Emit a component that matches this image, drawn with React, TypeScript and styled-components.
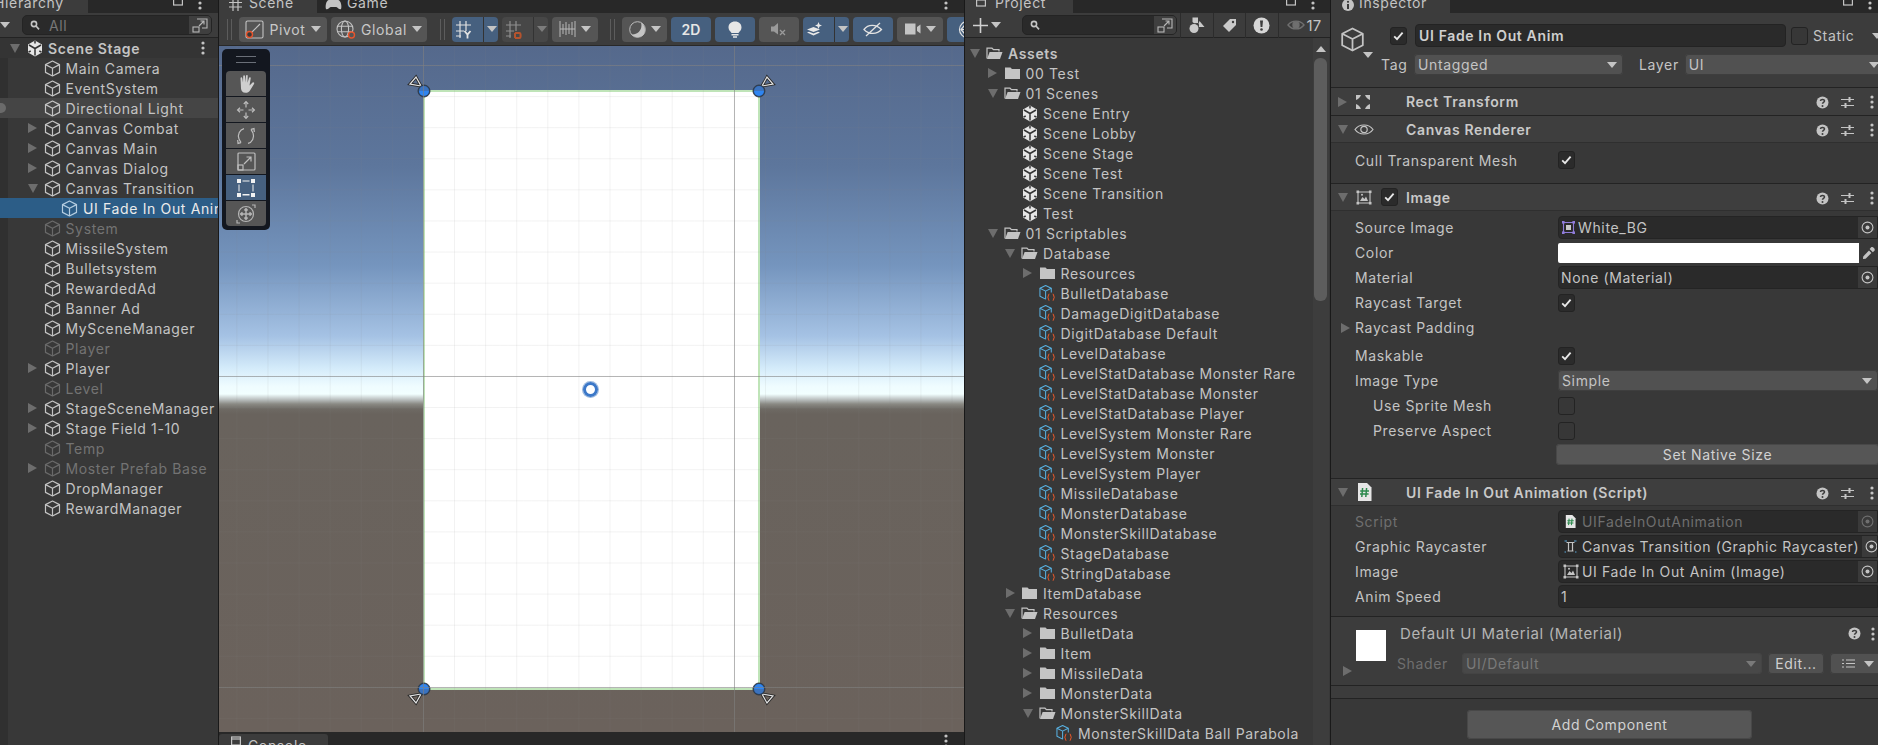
import React from 'react';
import styled, { createGlobalStyle } from 'styled-components';

const GlobalStyle = createGlobalStyle`
  html, body {
    margin: 0;
    padding: 0;
    width: 1878px;
    height: 745px;
    overflow: hidden;
    background: #191919;
  }
  * { box-sizing: border-box; }
`;

const TEXT = '#c4c4c4';

/* ---------- icons ---------- */

const Cube: React.FC<{ color?: string; size?: number }> = ({ color = '#c4c4c4', size = 17 }) => (
  <svg width={size} height={size} viewBox="0 0 17 17" fill="none" stroke={color} strokeWidth="1.2" strokeLinejoin="round">
    <path d="M8.5 1 15.5 4.6V12.4L8.5 16 1.5 12.4V4.6Z" />
    <path d="M1.5 4.6 8.5 8.2 15.5 4.6M8.5 8.2V16" />
  </svg>
);

const UnityLogo: React.FC = () => (
  <svg width="16" height="17" viewBox="0 0 16 17">
    <path fill="#e6e6e6" d="M8 0.5 15 4.5V12.5L8 16.5 1 12.5V4.5Z" />
    <path fill="none" stroke="#333" strokeWidth="1.5" d="M8 8.5V15.5M8 8.5 2 5M8 8.5 14 5M8 1V3.5M1.5 12.2 3.7 11M14.5 12.2 12.3 11" />
  </svg>
);

const Folder: React.FC<{ open?: boolean }> = ({ open }) => (
  <svg width="17" height="14" viewBox="0 0 17 14">
    {open ? (
      <>
        <path fill="none" stroke="#c4c4c4" strokeWidth="1.2" d="M1 12.5V2.2H6L7.5 3.6H13V5.5" />
        <path fill="#c4c4c4" d="M3.6 6H16.5L14 13H1Z" />
      </>
    ) : (
      <path fill="#c4c4c4" d="M1 1.5H6.5L8 3H16V13H1Z" />
    )}
  </svg>
);

const ScriptableIcon: React.FC = () => (
  <svg width="18" height="18" viewBox="0 0 18 18" fill="none">
    <g stroke="#58b0e0" strokeWidth="1.1" strokeLinejoin="round">
      <path d="M7 1 13 4V8.5M7 15.5 1 12.5V4L7 1" />
      <path d="M1 4 7 7 13 4M7 7V15.5" />
    </g>
    <g stroke="#e0562a" strokeWidth="1.2">
      <path d="M11 10C9.6 10 10.4 13.2 9 13.5 10.4 13.8 9.6 17 11 17" />
      <path d="M14.5 10C15.9 10 15.1 13.2 16.5 13.5 15.1 13.8 15.9 17 14.5 17" />
    </g>
  </svg>
);

const Arrow = styled.i<{ $open?: boolean; $tone?: string }>`
  display: block;
  width: 0;
  height: 0;
  ${(p) =>
    p.$open
      ? `border-left: 5px solid transparent; border-right: 5px solid transparent; border-top: 9px solid ${p.$tone || '#6d6d6d'};`
      : `border-top: 5px solid transparent; border-bottom: 5px solid transparent; border-left: 9px solid ${p.$tone || '#6d6d6d'};`}
`;

const Caret = styled.i<{ $tone?: string }>`
  display: block;
  flex: none;
  width: 0;
  height: 0;
  border-left: 5px solid transparent;
  border-right: 5px solid transparent;
  border-top: 6px solid ${(p) => p.$tone || '#c4c4c4'};
`;

const Dots: React.FC<{ color?: string }> = ({ color = '#c4c4c4' }) => (
  <svg width="4" height="14" viewBox="0 0 4 14" fill={color}>
    <circle cx="2" cy="2" r="1.6" />
    <circle cx="2" cy="7" r="1.6" />
    <circle cx="2" cy="12" r="1.6" />
  </svg>
);

const Maximize: React.FC = () => (
  <svg width="10" height="14" viewBox="0 0 10 14" fill="none" stroke="#c4c4c4" strokeWidth="1.2">
    <rect x="0.6" y="1" width="8.8" height="8" />
    <path d="M0.6 3H9.4" />
  </svg>
);

const Help: React.FC = () => (
  <svg width="13" height="13" viewBox="0 0 13 13">
    <circle cx="6.5" cy="6.5" r="6" fill="#c4c4c4" />
    <path d="M4.4 5C4.6 2.9 8.6 3 8.5 5 8.4 6.3 6.5 6.3 6.5 7.8" fill="none" stroke="#3c3c3c" strokeWidth="1.5" />
    <circle cx="6.5" cy="10" r="1" fill="#3c3c3c" />
  </svg>
);

const Presets: React.FC = () => (
  <svg width="13" height="13" viewBox="0 0 13 13" stroke="#c4c4c4" strokeWidth="1.2" fill="none">
    <path d="M0 3.5H13M0 9.5H13" />
    <path d="M8.5 1V6M4.5 7V12" strokeWidth="2" />
  </svg>
);

const SearchGlyph: React.FC = () => (
  <svg width="13" height="11" viewBox="0 0 13 11" fill="none" stroke="#c4c4c4" strokeWidth="1.6">
    <circle cx="4" cy="4" r="2.6" />
    <path d="M6 6 9 9.4" />
  </svg>
);

const ExpandGlyph: React.FC = () => (
  <svg width="16" height="15" viewBox="0 0 16 15" fill="none" stroke="#b8b8b8" strokeWidth="1.1">
    <path d="M5 1H15V10H10" />
    <rect x="1" y="9" width="6" height="5" />
    <path d="M7 8 12 3M8.5 3H12V6.5" />
  </svg>
);

const CircleDot: React.FC<{ color?: string }> = ({ color = '#c4c4c4' }) => (
  <svg width="13" height="13" viewBox="0 0 13 13" fill="none">
    <circle cx="6.5" cy="6.5" r="5.4" stroke={color} strokeWidth="1.1" />
    <circle cx="6.5" cy="6.5" r="2" fill={color} />
  </svg>
);

const Tick: React.FC = () => (
  <svg width="11" height="10" viewBox="0 0 11 10" fill="none" stroke="#e8e8e8" strokeWidth="1.8">
    <path d="M1.2 5.4 4 8.2 9.6 1.6" />
  </svg>
);

const ImageGlyph: React.FC<{ color?: string }> = ({ color = '#c4c4c4' }) => (
  <svg width="16" height="15" viewBox="0 0 16 15" fill="none" stroke={color} strokeWidth="1.1">
    <path d="M2 2H14V13H2Z" />
    <rect x="0.5" y="0.5" width="2.6" height="2.6" fill={color} stroke="none" />
    <rect x="12.9" y="0.5" width="2.6" height="2.6" fill={color} stroke="none" />
    <rect x="0.5" y="11.9" width="2.6" height="2.6" fill={color} stroke="none" />
    <rect x="12.9" y="11.9" width="2.6" height="2.6" fill={color} stroke="none" />
    <path d="M4 11 6.5 7 8.5 9 10 6.5 12 11Z" fill={color} stroke="none" />
    <circle cx="6" cy="4.8" r="1" fill={color} stroke="none" />
  </svg>
);

const SpriteGlyph: React.FC = () => (
  <svg width="13" height="13" viewBox="0 0 13 13" fill="none" stroke="#8f7bd8" strokeWidth="1.1">
    <path d="M1.5 1.5H11.5V11.5H1.5Z" />
    <rect x="0" y="0" width="2.6" height="2.6" fill="#8f7bd8" stroke="none" />
    <rect x="10.4" y="0" width="2.6" height="2.6" fill="#8f7bd8" stroke="none" />
    <rect x="0" y="10.4" width="2.6" height="2.6" fill="#8f7bd8" stroke="none" />
    <rect x="10.4" y="10.4" width="2.6" height="2.6" fill="#8f7bd8" stroke="none" />
    <rect x="4" y="4" width="5" height="5" fill="#c9c9c9" stroke="none" />
  </svg>
);

const RectGlyph: React.FC = () => (
  <svg width="16" height="16" viewBox="0 0 16 16" fill="#c4c4c4">
    <path d="M1 1H6L5 3 3 5 1 6ZM15 1H10L11 3 13 5 15 6ZM1 15H6L5 13 3 11 1 10ZM15 15H10L11 13 13 11 15 10Z" />
  </svg>
);

const EyeGlyph: React.FC = () => (
  <svg width="20" height="15" viewBox="0 0 20 15" fill="none" stroke="#c4c4c4" strokeWidth="1.2">
    <path d="M1 7.5C5 1.5 15 1.5 19 7.5 15 13.5 5 13.5 1 7.5Z" />
    <circle cx="10" cy="7.5" r="3.2" />
  </svg>
);

const ScriptGlyph: React.FC<{ small?: boolean }> = ({ small }) => (
  <svg width={small ? 11 : 15} height={small ? 13 : 18} viewBox="0 0 15 18">
    <path fill="#e6e6e6" d="M1 0H10L14.5 4.5V18H1Z" />
    <path stroke="#2d8a4e" strokeWidth="1.5" fill="none" d="M5.6 5 4.8 14M9.6 5 8.8 14M3.2 8H12M3 11H11.6" />
  </svg>
);

const Eyedropper: React.FC = () => (
  <svg width="14" height="14" viewBox="0 0 14 14" fill="#c4c4c4">
    <path d="M9 1.5C10.5 0 13.8 3.2 12.4 4.8L10.8 6.2 7.6 3Z" />
    <path d="M7 4.5 9.4 7 3.6 12.8 1 13 1.2 10.4Z" />
  </svg>
);

/* ---------- layout ---------- */

const Root = styled.div`
  display: flex;
  width: 1878px;
  height: 745px;
  overflow: hidden;
  background: #191919;
  font-family: Inter, 'Liberation Sans', sans-serif;
  font-size: 14px;
  letter-spacing: 0.64px;
  color: ${TEXT};
`;

const Panel = styled.section<{ $width: number; $gap?: number }>`
  flex: none;
  display: flex;
  flex-direction: column;
  width: ${(p) => p.$width}px;
  margin-right: ${(p) => p.$gap ?? 0}px;
  height: 745px;
  overflow: hidden;
  background: #383838;
`;

const TabBar = styled.div`
  flex: none;
  height: 13px;
  display: flex;
  align-items: flex-end;
  background: #282828;
  overflow: hidden;
`;

const Tab = styled.div<{ $width: number; $active?: boolean; $pad?: number; $gap?: number }>`
  flex: none;
  width: ${(p) => p.$width}px;
  height: 13px;
  display: flex;
  align-items: flex-end;
  gap: ${(p) => p.$gap ?? 7}px;
  padding-left: ${(p) => p.$pad ?? 8}px;
  background: ${(p) => (p.$active ? '#3c3c3c' : 'transparent')};
  overflow: hidden;
  > span {
    line-height: 20px;
    white-space: nowrap;
  }
  > svg { flex: none; margin-bottom: 2px; }
`;

const ClippedLabel = styled.span`
  margin-left: -6px;
`;

const TabActions = styled.div<{ $gap?: number; $pad?: number; $top?: boolean }>`
  margin-left: auto;
  height: 13px;
  display: flex;
  align-items: ${(p) => (p.$top ? 'flex-start' : 'flex-end')};
  gap: ${(p) => p.$gap ?? 15}px;
  padding-right: ${(p) => p.$pad ?? 16}px;
  > svg { flex: none; margin-bottom: 3px; }
`;

const SearchToolbar = styled.div`
  flex: none;
  height: 25px;
  display: flex;
  align-items: center;
  border-bottom: 1px solid #232323;
  background: #3c3c3c;
`;

const SearchField = styled.div<{ $width: number; $left: number }>`
  flex: none;
  width: ${(p) => p.$width}px;
  height: 20px;
  margin-left: ${(p) => p.$left}px;
  display: flex;
  align-items: center;
  padding-left: 7px;
  gap: 6px;
  border-radius: 5px;
  background: #2a2a2a;
  border: 1px solid #242424;
  color: #777;
  > button {
    all: unset;
    margin-left: auto;
    width: 22px;
    height: 18px;
    display: flex;
    align-items: center;
    justify-content: center;
    background: #3f3f3f;
    border-radius: 0 4px 4px 0;
  }
`;

const Tree = styled.div<{ $gutter?: boolean; $top: number }>`
  flex: 1;
  min-width: 0;
  min-height: 0;
  padding-top: ${(p) => p.$top}px;
  overflow: hidden;
  background: ${(p) => (p.$gutter ? 'linear-gradient(90deg, #303030 8px, #383838 8px)' : '#383838')};
`;

const Row = styled.div<{ $depth: number; $base: number; $state?: string; $strong?: boolean }>`
  position: relative;
  height: 20px;
  display: flex;
  align-items: center;
  padding-left: ${(p) => p.$base + p.$depth * 17.5}px;
  white-space: nowrap;
  overflow: hidden;
  font-weight: ${(p) => (p.$strong ? 600 : 400)};
  color: ${(p) => (p.$state === 'off' ? '#737373' : p.$state === 'sel' ? '#ebebeb' : TEXT)};
  background: ${(p) => (p.$state === 'sel' ? '#2c5d87' : p.$state === 'hover' ? '#454545' : p.$state === 'root' ? '#343434' : 'transparent')};
`;

const RowArrow = styled.span`
  flex: none;
  width: 12px;
  display: flex;
  justify-content: center;
`;

const RowIcon = styled.span`
  flex: none;
  width: 17px;
  margin: 0 5px 0 5px;
  display: flex;
  justify-content: center;
  align-items: center;
`;

const RowDot = styled.i`
  position: absolute;
  left: -4px;
  top: 5px;
  width: 10px;
  height: 10px;
  border-radius: 50%;
  background: #6a6a6a;
`;

const RowEnd = styled.span`
  position: absolute;
  right: 13px;
  top: 3px;
  display: flex;
`;

/* ---------- scene ---------- */

const SceneToolbar = styled.div`
  flex: none;
  height: 33px;
  display: flex;
  align-items: center;
  padding-left: 8px;
  background: #3c3c3c;
  border-bottom: 1px solid #282828;
  overflow: hidden;
`;

const Grip = styled.i<{ $left: number; $right: number }>`
  flex: none;
  width: 5px;
  height: 21px;
  margin: 0 ${(p) => p.$right}px 0 ${(p) => p.$left}px;
  border-left: 1px solid #5c5c5c;
  border-right: 1px solid #5c5c5c;
`;

const ToolButton = styled.div<{ $width: number; $tone?: string; $gap?: number }>`
  flex: none;
  width: ${(p) => p.$width}px;
  height: 25px;
  margin-right: ${(p) => p.$gap ?? 4}px;
  display: flex;
  align-items: center;
  justify-content: center;
  gap: 5px;
  border-radius: 4px;
  font-size: 14px;
  color: #c8c8c8;
  background: ${(p) => (p.$tone === 'blue' ? '#46607f' : p.$tone === 'dim' ? '#474747' : '#555555')};
`;

const SplitPart = styled.span<{ $width: number }>`
  flex: none;
  width: ${(p) => p.$width}px;
  height: 100%;
  display: flex;
  align-items: center;
  justify-content: center;
  & + & { border-left: 1px solid #333; }
`;

const Badge2D = styled.span`
  font-weight: 600;
  color: #e6e6e6;
  letter-spacing: 0;
`;

const Viewport = styled.div`
  position: relative;
  flex: none;
  height: 686px;
  overflow: hidden;
  background: linear-gradient(
    180deg,
    #55698c 0px,
    #5d769c 120px,
    #7595be 220px,
    #a5c2e4 290px,
    #d4ebfa 322px,
    #effcff 340px,
    #f2ffff 348px,
    #c0c6c6 353px,
    #8a8a84 358px,
    #6e6a64 363px,
    #69635d 368px,
    #6b625c 686px
  );
`;

const SceneRect = styled.div`
  position: absolute;
  left: 204px;
  top: 44px;
  width: 337px;
  height: 600px;
  background: #fff;
  border: 2px solid #bfe4b8;
`;

const GridLayer = styled.div`
  position: absolute;
  inset: 0;
  pointer-events: none;
  background-image:
    linear-gradient(90deg, rgba(128, 128, 128, 0.55) 1px, transparent 1px),
    linear-gradient(180deg, rgba(128, 128, 128, 0.55) 1px, transparent 1px),
    linear-gradient(90deg, rgba(128, 128, 128, 0.1) 1px, transparent 1px),
    linear-gradient(180deg, rgba(128, 128, 128, 0.1) 1px, transparent 1px);
  background-size: 311px 311px, 311px 311px, 31.1px 31.1px, 31.1px 31.1px;
  background-position: 204px 19px, 204px 19px, 17.4px 19px, 17.4px 19px;
`;

const Gizmo = styled.svg<{ $h: string; $v: string; $flipX?: boolean; $flipY?: boolean }>`
  position: absolute;
  width: 30px;
  height: 30px;
  ${(p) => p.$h}: -16px;
  ${(p) => p.$v}: -16px;
  transform: scale(${(p) => (p.$flipX ? -1 : 1)}, ${(p) => (p.$flipY ? -1 : 1)});
  overflow: visible;
`;

const Pivot = styled.i`
  position: absolute;
  left: 364px;
  top: 336px;
  width: 15px;
  height: 15px;
  border-radius: 50%;
  border: 3.5px solid #3c78c8;
  box-shadow: 0 0 0 1px #9db9dd;
`;

const ToolDock = styled.div`
  position: absolute;
  left: 3px;
  top: 3px;
  width: 48px;
  height: 181px;
  padding: 22px 4px 0;
  display: flex;
  flex-direction: column;
  gap: 1px;
  background: #13171f;
  border-radius: 5px;
  &::before {
    content: '';
    position: absolute;
    left: 14px;
    top: 7px;
    width: 20px;
    height: 5px;
    border-top: 1px solid #6a6f78;
    border-bottom: 1px solid #6a6f78;
  }
`;

const DockButton = styled.div<{ $active?: boolean }>`
  height: 25px;
  display: flex;
  align-items: center;
  justify-content: center;
  background: ${(p) => (p.$active ? '#46607f' : '#565656')};
  &:first-of-type { border-radius: 4px 4px 0 0; }
  &:last-of-type { border-radius: 0 0 4px 4px; }
`;

const ConsoleBar = styled.div`
  flex: none;
  height: 13px;
  padding-top: 2px;
  background: #282828;
  display: flex;
  overflow: hidden;
`;

const ConsoleTab = styled.div`
  flex: none;
  width: 109px;
  height: 14px;
  padding-left: 12px;
  display: flex;
  gap: 7px;
  background: #3c3c3c;
  border-radius: 3px 3px 0 0;
  > span { line-height: 20px; margin-top: 2px; }
  > svg { margin-top: 2px; flex: none; }
`;

/* ---------- project ---------- */

const FilterGap = styled.span`
  flex: none;
  width: 3px;
`;

const FilterCell = styled.div`
  flex: none;
  width: 32.5px;
  height: 25px;
  display: flex;
  align-items: center;
  justify-content: center;
  border-left: 1px solid #2c2c2c;
`;

const AddButton = styled.div`
  flex: none;
  display: flex;
  align-items: center;
  gap: 3px;
  width: 57px;
  padding-left: 8px;
`;

const CountCell = styled.div`
  flex: none;
  display: flex;
  align-items: center;
  gap: 2px;
  padding-left: 8px;
  height: 25px;
  border-left: 1px solid #2c2c2c;
  font-size: 15px;
  letter-spacing: 0.2px;
`;

const TreeWrap = styled.div`
  position: relative;
  flex: 1;
  min-height: 0;
  display: flex;
`;

const ScrollTrack = styled.div`
  position: relative;
  flex: none;
  width: 16px;
  margin-right: 1px;
  background: #3d3d3d;
  &::before {
    content: '';
    position: absolute;
    left: 3px;
    top: 8px;
    border-left: 5px solid transparent;
    border-right: 5px solid transparent;
    border-bottom: 6px solid #c4c4c4;
  }
  &::after {
    content: '';
    position: absolute;
    left: 1px;
    top: 20px;
    width: 13px;
    height: 243px;
    border-radius: 6px;
    background: #5d5d5d;
  }
`;

/* ---------- inspector ---------- */

const InspectorHead = styled.div`
  flex: none;
  height: 75px;
  background: #3c3c3c;
  border-bottom: 1px solid #232323;
  display: grid;
  grid-template-columns: 24px 1fr;
  padding: 11px 0 0 9px;
`;

const HeadIcon = styled.div`
  position: relative;
  width: 24px;
  height: 26px;
  margin-top: 3px;
  > i { position: absolute; right: -9px; bottom: -5px; }
`;

const HeadLines = styled.div`
  display: flex;
  flex-direction: column;
`;

const HeadLine = styled.div<{ $second?: boolean }>`
  display: flex;
  align-items: center;
  height: ${(p) => (p.$second ? 21 : 23)}px;
  margin-top: ${(p) => (p.$second ? 7 : 0)}px;
  white-space: nowrap;
`;

const HeadIndent = styled.span`
  flex: none;
  width: 26px;
`;

const TagLabel = styled.span`
  flex: none;
  width: 50px;
  padding-left: 17px;
`;

const LayerLabel = styled.span`
  margin: 0 6px 0 16px;
`;

const StaticLabel = styled.span`
  margin-left: 5px;
  margin-right: 18px;
`;

const Check = styled.div<{ $on?: boolean }>`
  flex: none;
  width: 17px;
  height: 18px;
  display: flex;
  align-items: center;
  justify-content: center;
  border-radius: 3px;
  background: ${(p) => (p.$on ? '#2b2b2b' : '#373737')};
  border: 1px solid #232323;
`;

const NameField = styled.div`
  flex: none;
  width: 371px;
  height: 23px;
  margin: 0 5px 0 8px;
  padding-left: 3px;
  display: flex;
  align-items: center;
  font-weight: 600;
  color: #cfcfcf;
  background: #2a2a2a;
  border: 1px solid #232323;
  border-radius: 4px;
`;

const Dropdown = styled.div<{ $width?: number; $dim?: boolean }>`
  flex: ${(p) => (p.$width ? 'none' : 1)};
  width: ${(p) => (p.$width ? `${p.$width}px` : 'auto')};
  min-width: 0;
  height: 21px;
  padding: 0 6px 0 4px;
  display: flex;
  align-items: center;
  justify-content: space-between;
  border-radius: 4px;
  white-space: nowrap;
  color: ${(p) => (p.$dim ? '#7a7a7a' : TEXT)};
  background: ${(p) => (p.$dim ? '#484848' : '#515151')};
  box-shadow: inset 0 0 0 1px ${(p) => (p.$dim ? '#444' : '#3e3e3e')};
`;

const Section = styled.div<{ $first?: boolean }>`
  position: relative;
  flex: none;
  height: ${(p) => (p.$first ? 28 : 27)}px;
  display: flex;
  align-items: center;
  padding-left: 7px;
  background: #3e3e3e;
  border-bottom: 1px solid ${(p) => (p.$first ? '#232323' : '#2f2f2f')};
  font-weight: 600;
  color: #c9c9c9;
  white-space: nowrap;
`;

const SectionIcon = styled.span`
  flex: none;
  width: 20px;
  margin-left: 6px;
  display: flex;
  justify-content: center;
`;

const SectionTitle = styled.span`
  position: absolute;
  left: 75px;
`;

const SectionCheck = styled(Check)`
  position: absolute;
  left: 50px;
`;

const SectionTools = styled.div`
  position: absolute;
  right: 4px;
  top: 7px;
  display: grid;
  grid-template-columns: 13px 13px 8px;
  column-gap: 12px;
  align-items: center;
  justify-items: end;
`;

const Body = styled.div<{ $bottom: number; $top: number }>`
  flex: none;
  padding: ${(p) => p.$top}px 0 ${(p) => p.$bottom}px;
  border-bottom: 1px solid #232323;
`;

const Field = styled.div<{ $h?: number; $indent?: boolean; $dim?: boolean; $after?: boolean }>`
  position: relative;
  height: ${(p) => p.$h ?? 25}px;
  margin-top: ${(p) => (p.$after ? 3 : 0)}px;
  display: grid;
  align-items: center;
  padding-left: ${(p) => (p.$indent ? 42 : 24)}px;
  grid-template-columns: ${(p) => (p.$indent ? '185px 1fr' : '203px 1fr')};
  white-space: nowrap;
  color: ${(p) => (p.$dim ? '#6f6f6f' : TEXT)};
  > i { position: absolute; left: 10px; top: 8px; }
`;

const ObjectField = styled.div<{ $muted?: boolean; $plain?: boolean }>`
  height: 23px;
  display: flex;
  align-items: center;
  gap: 3px;
  padding-left: ${(p) => (p.$plain ? 2 : 3)}px;
  background: #2a2a2a;
  border: 1px solid #242424;
  border-radius: 4px 0 0 4px;
  color: ${(p) => (p.$muted ? '#6f6f6f' : TEXT)};
  overflow: hidden;
`;

const FieldGlyph = styled.span`
  flex: none;
  width: 17px;
  display: flex;
  justify-content: center;
`;

const Picker = styled.span`
  margin-left: auto;
  flex: none;
  width: 19px;
  height: 21px;
  display: flex;
  align-items: center;
  justify-content: center;
  background: #3a3a3a;
`;

const ColorWell = styled.div`
  height: 21px;
  display: flex;
  align-items: center;
  > b { display: block; width: 301px; height: 20px; background: #fff; border-radius: 2px 0 0 2px; }
  > svg { margin-left: 3px; flex: none; }
`;

const WideButton = styled.div<{ $width: number; $left: number; $height: number; $top?: number }>`
  width: ${(p) => p.$width}px;
  height: ${(p) => p.$height}px;
  margin-left: ${(p) => p.$left}px;
  margin-top: ${(p) => p.$top ?? 0}px;
  display: flex;
  align-items: center;
  justify-content: center;
  background: #565656;
  color: #d2d2d2;
  border-radius: 4px;
  box-shadow: inset 0 0 0 1px #484848;
`;

const MaterialPanel = styled.div`
  position: relative;
  flex: none;
  height: 69px;
  background: #3c3c3c;
  border-bottom: 1px solid #232323;
`;

const Swatch = styled.div`
  position: absolute;
  left: 25px;
  top: 13px;
  width: 30px;
  height: 31px;
  background: #fff;
`;

const MaterialArrow = styled.span`
  position: absolute;
  left: 12px;
  top: 49px;
`;

const MaterialTitle = styled.div`
  position: absolute;
  left: 69px;
  top: 7px;
  color: #b4b4b4;
  font-size: 15px;
  white-space: nowrap;
`;

const MaterialRow = styled.div`
  position: absolute;
  left: 66px;
  right: -6px;
  top: 36px;
  height: 21px;
  display: flex;
  align-items: center;
  color: #6f6f6f;
  > label { width: 65px; flex: none; }
`;

const SmallButton = styled.div<{ $width: number }>`
  flex: none;
  width: ${(p) => p.$width}px;
  height: 21px;
  margin-left: 6px;
  display: flex;
  align-items: center;
  justify-content: center;
  gap: 9px;
  background: #515151;
  border-radius: 4px;
  color: #d0d0d0;
  box-shadow: inset 0 0 0 1px #3e3e3e;
`;

const MaterialHelp = styled.div`
  position: absolute;
  right: 3px;
  top: 10px;
  display: flex;
  gap: 10px;
`;

const Spacer = styled.div<{ $h: number }>`
  flex: none;
  height: ${(p) => p.$h}px;
  border-bottom: 1px solid #232323;
  background: #3c3c3c;
`;

const AddRow = styled.div`
  flex: none;
  padding-top: 11px;
`;

/* ---------- data ---------- */

type Item = { name: string; depth: number; arrow?: 'open' | 'closed'; icon: 'cube' | 'logo' | 'folder' | 'open' | 'data'; state?: string; strong?: boolean; dot?: boolean };

const hierarchy: Item[] = [
  { name: 'Scene Stage', depth: 0, arrow: 'open', icon: 'logo', strong: true, state: 'root' },
  { name: 'Main Camera', depth: 1, icon: 'cube' },
  { name: 'EventSystem', depth: 1, icon: 'cube' },
  { name: 'Directional Light', depth: 1, icon: 'cube', state: 'hover', dot: true },
  { name: 'Canvas Combat', depth: 1, arrow: 'closed', icon: 'cube' },
  { name: 'Canvas Main', depth: 1, arrow: 'closed', icon: 'cube' },
  { name: 'Canvas Dialog', depth: 1, arrow: 'closed', icon: 'cube' },
  { name: 'Canvas Transition', depth: 1, arrow: 'open', icon: 'cube' },
  { name: 'UI Fade In Out Anim', depth: 2, icon: 'cube', state: 'sel' },
  { name: 'System', depth: 1, icon: 'cube', state: 'off' },
  { name: 'MissileSystem', depth: 1, icon: 'cube' },
  { name: 'Bulletsystem', depth: 1, icon: 'cube' },
  { name: 'RewardedAd', depth: 1, icon: 'cube' },
  { name: 'Banner Ad', depth: 1, icon: 'cube' },
  { name: 'MySceneManager', depth: 1, icon: 'cube' },
  { name: 'Player', depth: 1, icon: 'cube', state: 'off' },
  { name: 'Player', depth: 1, arrow: 'closed', icon: 'cube' },
  { name: 'Level', depth: 1, icon: 'cube', state: 'off' },
  { name: 'StageSceneManager', depth: 1, arrow: 'closed', icon: 'cube' },
  { name: 'Stage Field 1-10', depth: 1, arrow: 'closed', icon: 'cube' },
  { name: 'Temp', depth: 1, icon: 'cube', state: 'off' },
  { name: 'Moster Prefab Base', depth: 1, arrow: 'closed', icon: 'cube', state: 'off' },
  { name: 'DropManager', depth: 1, icon: 'cube' },
  { name: 'RewardManager', depth: 1, icon: 'cube' },
];

const dataRow = (name: string, depth = 3): Item => ({ name, depth, icon: 'data' });
const sceneRow = (name: string): Item => ({ name, depth: 2, icon: 'logo' });
const folderRow = (name: string, depth: number, open?: boolean): Item => ({ name, depth, arrow: open ? 'open' : 'closed', icon: open ? 'open' : 'folder' });

const project: Item[] = [
  { name: 'Assets', depth: 0, arrow: 'open', icon: 'open', strong: true },
  folderRow('00 Test', 1),
  folderRow('01 Scenes', 1, true),
  sceneRow('Scene Entry'),
  sceneRow('Scene Lobby'),
  sceneRow('Scene Stage'),
  sceneRow('Scene Test'),
  sceneRow('Scene Transition'),
  sceneRow('Test'),
  folderRow('01 Scriptables', 1, true),
  folderRow('Database', 2, true),
  folderRow('Resources', 3),
  dataRow('BulletDatabase'),
  dataRow('DamageDigitDatabase'),
  dataRow('DigitDatabase Default'),
  dataRow('LevelDatabase'),
  dataRow('LevelStatDatabase Monster Rare'),
  dataRow('LevelStatDatabase Monster'),
  dataRow('LevelStatDatabase Player'),
  dataRow('LevelSystem Monster Rare'),
  dataRow('LevelSystem Monster'),
  dataRow('LevelSystem Player'),
  dataRow('MissileDatabase'),
  dataRow('MonsterDatabase'),
  dataRow('MonsterSkillDatabase'),
  dataRow('StageDatabase'),
  dataRow('StringDatabase'),
  folderRow('ItemDatabase', 2),
  folderRow('Resources', 2, true),
  folderRow('BulletData', 3),
  folderRow('Item', 3),
  folderRow('MissileData', 3),
  folderRow('MonsterData', 3),
  folderRow('MonsterSkillData', 3, true),
  dataRow('MonsterSkillData Ball Parabola', 4),
];

const renderIcon = (item: Item) => {
  const off = item.state === 'off';
  if (item.icon === 'logo') return <UnityLogo />;
  if (item.icon === 'folder') return <Folder />;
  if (item.icon === 'open') return <Folder open />;
  if (item.icon === 'data') return <ScriptableIcon />;
  return <Cube color={off ? '#6a6a6a' : item.state === 'sel' ? '#b5cde0' : '#c4c4c4'} />;
};

const TreeRows: React.FC<{ items: Item[]; base: number }> = ({ items, base }) => (
  <>
    {items.map((item, i) => (
      <Row key={item.name + i} $depth={item.depth} $base={base} $state={item.state} $strong={item.strong}>
        {item.dot && <RowDot />}
        <RowArrow>{item.arrow && <Arrow $open={item.arrow === 'open'} />}</RowArrow>
        <RowIcon>{renderIcon(item)}</RowIcon>
        <span>{item.name}</span>
        {item.state === 'root' && (
          <RowEnd>
            <Dots />
          </RowEnd>
        )}
      </Row>
    ))}
  </>
);

const SectionButtons: React.FC = () => (
  <SectionTools>
    <Help />
    <Presets />
    <Dots />
  </SectionTools>
);

const Corner: React.FC<{ h: string; v: string; flipX?: boolean; flipY?: boolean }> = ({ h, v, flipX, flipY }) => (
  <Gizmo $h={h} $v={v} $flipX={flipX} $flipY={flipY} viewBox="0 0 30 30">
    <path d="M12 10 1 8 7 1Z" fill="none" stroke="#2b2b2b" strokeWidth="3" />
    <path d="M12 10 1 8 7 1Z" fill="none" stroke="#e6e6e6" strokeWidth="1.2" />
    <circle cx="15" cy="15" r="6" fill="#26456e" stroke="#303a47" strokeWidth="1" />
    <path d="M10 15A5 5 0 0 0 20 15Z" fill="#2f85f0" />
    <path d="M10 15A5 5 0 0 1 20 15Z" fill="#3b73bf" />
  </Gizmo>
);

/* toolbar drawings */

const PivotGlyph: React.FC = () => (
  <svg width="19" height="19" viewBox="0 0 19 19" fill="none">
    <rect x="1" y="1" width="17" height="17" rx="1.5" stroke="#c4c4c4" strokeWidth="1.1" />
    <path d="M5 14 15 4" stroke="#c4c4c4" strokeWidth="1.1" />
    <circle cx="4.5" cy="14.5" r="3" fill="#383838" stroke="#e8552d" strokeWidth="1.4" />
  </svg>
);

const GlobeGlyph: React.FC = () => (
  <svg width="20" height="19" viewBox="0 0 20 19" fill="none" stroke="#c4c4c4" strokeWidth="1.1">
    <circle cx="9" cy="9" r="8" />
    <ellipse cx="9" cy="9" rx="3.6" ry="8" />
    <path d="M1.5 6.3H16.5M1.5 11.7H16.5" />
    <circle cx="15.5" cy="15" r="3" fill="#555" stroke="#e8552d" strokeWidth="1.4" />
  </svg>
);

const GridGlyph: React.FC<{ dim?: boolean }> = ({ dim }) => (
  <svg width="17" height="19" viewBox="0 0 17 19" fill="none" stroke={dim ? '#8f8f8f' : '#e2e2e2'} strokeWidth="1.2">
    <path d="M5 1V18M11 1V11M1 5H16M1 11H9M1 16H6" />
    {dim ? (
      <path d="M10 13H14.5C16 13 16 18 14.5 18H10M10 13V18" stroke="#b4532d" strokeWidth="2" />
    ) : (
      <path d="M9.5 11 12.5 14.5 15.5 11M12.5 14.5V18.5" strokeWidth="1.8" />
    )}
  </svg>
);

const RulerGlyph: React.FC = () => (
  <svg width="17" height="18" viewBox="0 0 17 18" fill="none" stroke="#b8b8b8" strokeWidth="1">
    <path d="M1 1V17M16 1V17M1 9H16M4 4V14M7 2V15M10 4V14M13 2V15" />
  </svg>
);

const Shading: React.FC = () => (
  <svg width="17" height="17" viewBox="0 0 17 17">
    <circle cx="8.5" cy="8.5" r="7.8" fill="none" stroke="#bdbdbd" strokeWidth="1" />
    <path d="M12 1.6C14 8 9 14 2.6 13.5 5 17 12 17.5 15 13 17 9.5 16 4 12 1.6Z" fill="#c4c4c4" />
  </svg>
);

const Bulb: React.FC = () => (
  <svg width="14" height="17" viewBox="0 0 14 17" fill="#e6e6e6">
    <path d="M7 0.5C11 0.5 13.5 3 13.5 6.5 13.5 9 11.5 10.5 10.5 12H3.5C2.5 10.5 0.5 9 0.5 6.5 0.5 3 3 0.5 7 0.5Z" />
    <path d="M3.5 13H10.5V14.5H3.5ZM5 15.3H9V16.8H5Z" />
  </svg>
);

const Mute: React.FC = () => (
  <svg width="18" height="15" viewBox="0 0 18 15">
    <path fill="#9a9a9a" d="M1 4.5H4L8 1V12.5L4 9.5H1Z" />
    <path d="M10 8 15 13M15 8 10 13" stroke="#9a9a9a" strokeWidth="1.3" />
  </svg>
);

const Layers: React.FC = () => (
  <svg width="17" height="15" viewBox="0 0 17 15" fill="#e8e8e8">
    <path d="M1 7.5 7.5 5 14 7.5 7.5 10Z" />
    <path d="M1 10.5 3 9.7 7.5 11.5 12 9.7 14 10.5 7.5 13.5Z" />
    <path d="M12.5 0 13.5 2.5 16 3.5 13.5 4.5 12.5 7 11.5 4.5 9 3.5 11.5 2.5Z" />
  </svg>
);

const HiddenEye: React.FC = () => (
  <svg width="20" height="15" viewBox="0 0 20 15" fill="none" stroke="#e2e2e2" strokeWidth="1.3">
    <path d="M1 7.5C5 2 13 2 18.5 7.5 14 12.5 6 13 1 7.5Z" />
    <path d="M3 14 17 1" />
  </svg>
);

const Camera: React.FC = () => (
  <svg width="16" height="12" viewBox="0 0 16 12" fill="#c4c4c4">
    <rect x="0" y="0.5" width="10.5" height="11" />
    <path d="M12 4 15.5 1.5V10.5L12 8Z" />
  </svg>
);

const GizmoGlobe: React.FC = () => (
  <svg width="19" height="19" viewBox="0 0 19 19" fill="none" stroke="#e2e2e2" strokeWidth="1.2">
    <circle cx="9.5" cy="9.5" r="8" />
    <path d="M3 9.5H16M9.5 2 3 9.5 9.5 17" />
  </svg>
);

const HandGlyph: React.FC = () => (
  <svg width="20" height="19" viewBox="0 0 20 19" fill="#cfcfcf">
    <path d="M4.5 4.2C4.5 3 6.2 3 6.3 4.2L7 8.5 7.2 2.2C7.2 1 9 1 9 2.2L9.4 8.4 10 1.8C10.1 0.6 11.8 0.6 11.7 1.9L11.5 8.7 13 4C13.4 2.8 15 3.3 14.7 4.5L13.5 11.5 16.6 8.6C17.6 7.8 18.8 9 18 10L14 16.5C13 18.2 11.5 18.8 9.5 18.8 6.5 18.8 5.3 17 5 14.5Z" />
  </svg>
);

const MoveGlyph: React.FC = () => (
  <svg width="20" height="20" viewBox="0 0 20 20" fill="none" stroke="#bdbdbd" strokeWidth="1.2">
    <path d="M10 2V7.5M10 12.5V18M2 10H7.5M12.5 10H18" />
    <path d="M7.8 4 10 1.6 12.2 4M7.8 16 10 18.4 12.2 16M4 7.8 1.6 10 4 12.2M16 7.8 18.4 10 16 12.2" />
  </svg>
);

const RotateGlyph: React.FC = () => (
  <svg width="20" height="20" viewBox="0 0 20 20" fill="none" stroke="#bdbdbd" strokeWidth="1.2">
    <path d="M8 2.6C3.8 3.6 1.2 8.6 3 13M5 16.6 2 17.4 1.7 14" />
    <path d="M12 17.4C16.2 16.4 18.8 11.4 17 7M15 3.4 18 2.6 18.3 6" />
    <path d="M3 13 5 16.6M17 7 15 3.4" />
  </svg>
);

const ScaleGlyph: React.FC = () => (
  <svg width="19" height="19" viewBox="0 0 19 19" fill="none" stroke="#bdbdbd" strokeWidth="1.2">
    <rect x="1" y="1" width="17" height="17" rx="1" />
    <rect x="1" y="13" width="5" height="5" />
    <path d="M7 12 14 5M9.5 5H14V9.5" />
  </svg>
);

const RectTool: React.FC = () => (
  <svg width="20" height="20" viewBox="0 0 20 20" fill="#f2f2f2">
    <rect x="1" y="1" width="4" height="4" />
    <rect x="15" y="1" width="4" height="4" />
    <rect x="1" y="15" width="4" height="4" />
    <rect x="15" y="15" width="4" height="4" />
    <path d="M6.5 2.5H13.5V3.5H6.5ZM6.5 16H13.5V17.5H6.5ZM2.5 6.5H3.5V13.5H2.5ZM16.5 6.5H17.5V13.5H16.5Z" />
  </svg>
);

const TransformTool: React.FC = () => (
  <svg width="20" height="20" viewBox="0 0 20 20" fill="none" stroke="#b4b4b4" strokeWidth="1.2">
    <circle cx="10" cy="10" r="7.5" />
    <path d="M10 5V15M5 10H15M8.4 6.5 10 4.6 11.6 6.5M8.4 13.5 10 15.4 11.6 13.5M6.5 8.4 4.6 10 6.5 11.6M13.5 8.4 15.4 10 13.5 11.6" strokeWidth="1.5" />
    <path d="M1 16V19H4M19 4V1H16" />
  </svg>
);

const FilterShapes: React.FC = () => (
  <svg width="16" height="16" viewBox="0 0 16 16" fill="#c9c9c9">
    <circle cx="5" cy="11.5" r="4.5" />
    <path d="M3.5 0.5H9V6L5 6.2 3.5 5Z" />
    <path d="M10.5 4 15.5 10H9.8C10.2 8.5 10 7 9.5 6.5Z" />
  </svg>
);

const FilterTag: React.FC = () => (
  <svg width="15" height="15" viewBox="0 0 15 15">
    <path fill="#c9c9c9" d="M8 1H14V7L7 14 1 8Z" />
    <circle cx="11" cy="4" r="1.2" fill="#3c3c3c" />
  </svg>
);

const FilterWarn: React.FC = () => (
  <svg width="17" height="17" viewBox="0 0 17 17">
    <circle cx="8.5" cy="8.5" r="8" fill="#d6d6d6" />
    <path d="M7 3.5H10L9.4 10H7.6Z" fill="#3c3c3c" />
    <circle cx="8.5" cy="12.5" r="1.3" fill="#3c3c3c" />
  </svg>
);

const FilterEye: React.FC = () => (
  <svg width="18" height="12" viewBox="0 0 18 12" fill="none" stroke="#6f6f6f" strokeWidth="1.4">
    <path d="M1 6C5 0.8 13 0.8 17 6 13 11.2 5 11.2 1 6Z" />
    <circle cx="9" cy="6" r="3" fill="#6f6f6f" />
  </svg>
);

const Plus: React.FC = () => (
  <svg width="15" height="15" viewBox="0 0 15 15" stroke="#d0d0d0" strokeWidth="1.6">
    <path d="M7.5 0V15M0 7.5H15" />
  </svg>
);

const ListGlyph: React.FC = () => (
  <svg width="14" height="11" viewBox="0 0 14 11" stroke="#c4c4c4" strokeWidth="1.1">
    <path d="M5 2H14M5 5.5H14M5 9H14M1 2H3M1 5.5H3M1 9H3" />
  </svg>
);

const RaycastGlyph: React.FC = () => (
  <svg width="13" height="13" viewBox="0 0 13 13" fill="none" stroke="#c4c4c4" strokeWidth="1.2">
    <path d="M2.5 2.5H10.5M3.5 11H9.5M4.5 2.5V11M8.5 2.5V11" />
    <path d="M0.5 1H3M10 1H12.5M0.5 12H2M11 12H12.5" stroke="#5aa5d8" />
  </svg>
);

const TabGrid: React.FC = () => (
  <svg width="13" height="13" viewBox="0 0 13 13" stroke="#c4c4c4" strokeWidth="1.2">
    <path d="M4 1V13M9 1V13M0 4.5H13M0 9H13" />
  </svg>
);

const Pad: React.FC = () => (
  <svg width="17" height="12" viewBox="0 0 17 12">
    <path fill="#c4c4c4" d="M4 1H13C16 1 17 8 16 10 14.5 11.5 12.5 8 11 8H6C4.5 8 2.5 11.5 1 10 0 8 1 1 4 1Z" />
  </svg>
);

const InfoDot: React.FC = () => (
  <svg width="12" height="12" viewBox="0 0 12 12">
    <circle cx="6" cy="6" r="6" fill="#c4c4c4" />
    <path d="M6 5V10" stroke="#3c3c3c" strokeWidth="2" />
    <circle cx="6" cy="2.8" r="1.1" fill="#3c3c3c" />
  </svg>
);

const App: React.FC = () => (
  <>
    <GlobalStyle />
    <Root>
      <Panel $width={218} $gap={1}>
        <TabBar>
          <Tab $width={88} $active $pad={0}>
            <ClippedLabel>Hierarchy</ClippedLabel>
          </Tab>
          <TabActions $pad={16}>
            <Maximize />
            <Dots />
          </TabActions>
        </TabBar>
        <SearchToolbar>
          <Caret />
          <SearchField $width={190} $left={12}>
            <SearchGlyph />
            <span>All</span>
            <button>
              <ExpandGlyph />
            </button>
          </SearchField>
        </SearchToolbar>
        <Tree $gutter $top={0}>
          <TreeRows items={hierarchy} base={9} />
        </Tree>
      </Panel>

      <Panel $width={745} $gap={1}>
        <TabBar>
          <Tab $width={98} $active $pad={10}>
            <TabGrid />
            <span>Scene</span>
          </Tab>
          <Tab $width={100} $gap={5}>
            <Pad />
            <span>Game</span>
          </Tab>
          <TabActions $pad={16}>
            <Dots />
          </TabActions>
        </TabBar>
        <SceneToolbar>
          <Grip $left={0} $right={7} />
          <ToolButton $width={88}>
            <PivotGlyph />
            <span>Pivot</span>
            <Caret />
          </ToolButton>
          <ToolButton $width={96}>
            <GlobeGlyph />
            <span>Global</span>
            <Caret />
          </ToolButton>
          <Grip $left={9} $right={7} />
          <ToolButton $width={46} $tone="blue">
            <SplitPart $width={28}>
              <GridGlyph />
            </SplitPart>
            <SplitPart $width={18}>
              <Caret />
            </SplitPart>
          </ToolButton>
          <ToolButton $width={46} $tone="dim">
            <SplitPart $width={28}>
              <GridGlyph dim />
            </SplitPart>
            <SplitPart $width={18}>
              <Caret $tone="#7c7c7c" />
            </SplitPart>
          </ToolButton>
          <ToolButton $width={46}>
            <RulerGlyph />
            <Caret />
          </ToolButton>
          <Grip $left={8} $right={7} />
          <ToolButton $width={45}>
            <Shading />
            <Caret />
          </ToolButton>
          <ToolButton $width={40} $tone="blue">
            <Badge2D>2D</Badge2D>
          </ToolButton>
          <ToolButton $width={40} $tone="blue">
            <Bulb />
          </ToolButton>
          <ToolButton $width={40}>
            <Mute />
          </ToolButton>
          <ToolButton $width={46} $tone="blue">
            <SplitPart $width={28}>
              <Layers />
            </SplitPart>
            <SplitPart $width={18}>
              <Caret />
            </SplitPart>
          </ToolButton>
          <ToolButton $width={40} $tone="blue">
            <HiddenEye />
          </ToolButton>
          <ToolButton $width={46}>
            <Camera />
            <Caret />
          </ToolButton>
          <ToolButton $width={40} $tone="blue" $gap={0}>
            <GizmoGlobe />
          </ToolButton>
        </SceneToolbar>
        <Viewport>
          <SceneRect>
            <Corner h="left" v="top" />
            <Corner h="right" v="top" flipX />
            <Corner h="left" v="bottom" flipY />
            <Corner h="right" v="bottom" flipX flipY />
          </SceneRect>
          <GridLayer />
          <Pivot />
          <ToolDock>
            <DockButton>
              <HandGlyph />
            </DockButton>
            <DockButton>
              <MoveGlyph />
            </DockButton>
            <DockButton>
              <RotateGlyph />
            </DockButton>
            <DockButton>
              <ScaleGlyph />
            </DockButton>
            <DockButton $active>
              <RectTool />
            </DockButton>
            <DockButton>
              <TransformTool />
            </DockButton>
          </ToolDock>
        </Viewport>
        <ConsoleBar>
          <ConsoleTab>
            <Maximize />
            <span>Console</span>
          </ConsoleTab>
          <TabActions $pad={16} $top>
            <Dots />
          </TabActions>
        </ConsoleBar>
      </Panel>

      <Panel $width={365} $gap={1}>
        <TabBar>
          <Tab $width={108} $active $pad={11} $gap={9}>
            <Maximize />
            <span>Project</span>
          </Tab>
          <TabActions $pad={15}>
            <Maximize />
            <Dots />
          </TabActions>
        </TabBar>
        <SearchToolbar>
          <AddButton>
            <Plus />
            <Caret />
          </AddButton>
          <SearchField $width={155} $left={0}>
            <SearchGlyph />
            <button>
              <ExpandGlyph />
            </button>
          </SearchField>
          <FilterGap />
          <FilterCell>
            <FilterShapes />
          </FilterCell>
          <FilterCell>
            <FilterTag />
          </FilterCell>
          <FilterCell>
            <FilterWarn />
          </FilterCell>
          <CountCell>
            <FilterEye />
            <span>17</span>
          </CountCell>
        </SearchToolbar>
        <TreeWrap>
          <Tree $top={5}>
            <TreeRows items={project} base={4} />
          </Tree>
          <ScrollTrack />
        </TreeWrap>
      </Panel>

      <Panel $width={547}>
        <TabBar>
          <Tab $width={119} $active $pad={11} $gap={5}>
            <InfoDot />
            <span>Inspector</span>
          </Tab>
          <TabActions $pad={6}>
            <Maximize />
            <Dots />
          </TabActions>
        </TabBar>
        <InspectorHead>
          <HeadIcon>
            <Cube size={25} />
            <Caret />
          </HeadIcon>
          <HeadLines>
            <HeadLine>
              <HeadIndent />
              <Check $on>
                <Tick />
              </Check>
              <NameField>UI Fade In Out Anim</NameField>
              <Check />
              <StaticLabel>Static</StaticLabel>
              <Caret />
            </HeadLine>
            <HeadLine $second>
              <TagLabel>Tag</TagLabel>
              <Dropdown $width={209}>
                <span>Untagged</span>
                <Caret />
              </Dropdown>
              <LayerLabel>Layer</LayerLabel>
              <Dropdown $width={200}>
                <span>UI</span>
                <Caret />
              </Dropdown>
            </HeadLine>
          </HeadLines>
        </InspectorHead>

        <Section $first>
          <Arrow />
          <SectionIcon>
            <RectGlyph />
          </SectionIcon>
          <SectionTitle>Rect Transform</SectionTitle>
          <SectionButtons />
        </Section>
        <Section>
          <Arrow $open />
          <SectionIcon>
            <EyeGlyph />
          </SectionIcon>
          <SectionTitle>Canvas Renderer</SectionTitle>
          <SectionButtons />
        </Section>
        <Body $top={4} $bottom={10}>
          <Field $h={26}>
            <span>Cull Transparent Mesh</span>
            <Check $on>
              <Tick />
            </Check>
          </Field>
        </Body>

        <Section>
          <Arrow $open />
          <SectionIcon>
            <ImageGlyph />
          </SectionIcon>
          <SectionCheck $on>
            <Tick />
          </SectionCheck>
          <SectionTitle>Image</SectionTitle>
          <SectionButtons />
        </Section>
        <Body $top={4} $bottom={13}>
          <Field>
            <span>Source Image</span>
            <ObjectField>
              <SpriteGlyph />
              <span>White_BG</span>
              <Picker>
                <CircleDot />
              </Picker>
            </ObjectField>
          </Field>
          <Field>
            <span>Color</span>
            <ColorWell>
              <b />
              <Eyedropper />
            </ColorWell>
          </Field>
          <Field>
            <span>Material</span>
            <ObjectField $plain>
              <span>None (Material)</span>
              <Picker>
                <CircleDot />
              </Picker>
            </ObjectField>
          </Field>
          <Field>
            <span>Raycast Target</span>
            <Check $on>
              <Tick />
            </Check>
          </Field>
          <Field>
            <Arrow />
            <span>Raycast Padding</span>
          </Field>
          <Field $after>
            <span>Maskable</span>
            <Check $on>
              <Tick />
            </Check>
          </Field>
          <Field>
            <span>Image Type</span>
            <Dropdown>
              <span>Simple</span>
              <Caret />
            </Dropdown>
          </Field>
          <Field $indent>
            <span>Use Sprite Mesh</span>
            <Check />
          </Field>
          <Field $indent>
            <span>Preserve Aspect</span>
            <Check />
          </Field>
          <WideButton $width={323} $left={225} $height={21} $top={1}>
            Set Native Size
          </WideButton>
        </Body>

        <Section>
          <Arrow $open />
          <SectionIcon>
            <ScriptGlyph />
          </SectionIcon>
          <SectionTitle>UI Fade In Out Animation (Script)</SectionTitle>
          <SectionButtons />
        </Section>
        <Body $top={3} $bottom={7}>
          <Field $dim>
            <span>Script</span>
            <ObjectField $muted>
              <FieldGlyph>
                <ScriptGlyph small />
              </FieldGlyph>
              <span>UIFadeInOutAnimation</span>
              <Picker>
                <CircleDot color="#6f6f6f" />
              </Picker>
            </ObjectField>
          </Field>
          <Field>
            <span>Graphic Raycaster</span>
            <ObjectField>
              <FieldGlyph>
                <RaycastGlyph />
              </FieldGlyph>
              <span>Canvas Transition (Graphic Raycaster)</span>
              <Picker>
                <CircleDot />
              </Picker>
            </ObjectField>
          </Field>
          <Field>
            <span>Image</span>
            <ObjectField>
              <FieldGlyph>
                <ImageGlyph />
              </FieldGlyph>
              <span>UI Fade In Out Anim (Image)</span>
              <Picker>
                <CircleDot />
              </Picker>
            </ObjectField>
          </Field>
          <Field>
            <span>Anim Speed</span>
            <ObjectField $plain>
              <span>1</span>
            </ObjectField>
          </Field>
        </Body>

        <MaterialPanel>
          <Swatch />
          <MaterialTitle>Default UI Material (Material)</MaterialTitle>
          <MaterialArrow>
            <Arrow />
          </MaterialArrow>
          <MaterialRow>
            <label>Shader</label>
            <Dropdown $width={300} $dim>
              <span>UI/Default</span>
              <Caret $tone="#7a7a7a" />
            </Dropdown>
            <SmallButton $width={56}>Edit...</SmallButton>
            <SmallButton $width={55}>
              <ListGlyph />
              <Caret />
            </SmallButton>
          </MaterialRow>
          <MaterialHelp>
            <Help />
            <Dots />
          </MaterialHelp>
        </MaterialPanel>
        <Spacer $h={13} />
        <AddRow>
          <WideButton $width={285} $left={136} $height={29}>
            Add Component
          </WideButton>
        </AddRow>
      </Panel>
    </Root>
  </>
);

export default App;
